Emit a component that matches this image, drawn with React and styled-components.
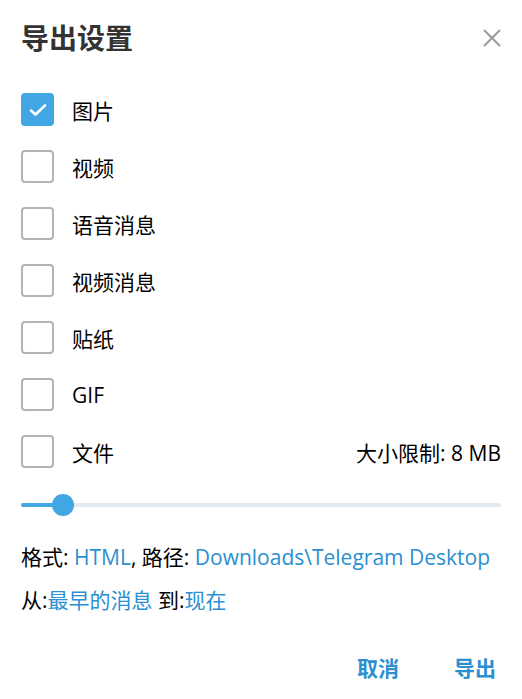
import React, { useState } from 'react'
import styled, { createGlobalStyle } from 'styled-components'

const Global = createGlobalStyle`
    html, body {
        margin: 0;
        background: #fff;
    }
    body {
        font-family: 'Open Sans', 'Noto Sans CJK SC', sans-serif;
        color: #000;
    }
`

const Box = styled.section`
    width: 522px;
    height: 699px;
    box-sizing: border-box;
    padding: 0 21px 0 21px;
    display: flex;
    flex-direction: column;
`

const Header = styled.header`
    height: 76px;
    display: flex;
    align-items: center;
    justify-content: space-between;
    .title {
        margin: 0;
        font-size: 28px;
        font-weight: 700;
        color: #333;
        line-height: 34px;
    }
`

const CloseBtn = styled.button`
    border: 0;
    background: none;
    padding: 0;
    margin-right: -4px;
    width: 26px;
    height: 26px;
    display: flex;
    align-items: center;
    justify-content: center;
    cursor: pointer;
`

const Options = styled.ul`
    list-style: none;
    margin: 17px 0 0;
    padding: 0;
    display: flex;
    flex-direction: column;
    gap: 24px;
`

const Row = styled.li`
    display: flex;
    align-items: center;
    height: 33px;
    font-size: 21px;
    .label {
        margin-left: 18px;
        flex: 1;
    }
`

const Check = styled.span`
    width: 33px;
    height: 33px;
    box-sizing: border-box;
    border-radius: 4px;
    border: ${p => (p.$on ? 'none' : '2px solid #b3b3b3')};
    background: ${p => (p.$on ? '#40a7e3' : '#fff')};
    display: flex;
    align-items: center;
    justify-content: center;
    flex-shrink: 0;
`

const Slider = styled.div`
    position: relative;
    margin-top: 25px;
    height: 24px;
    display: flex;
    align-items: center;
    .track {
        flex: 1;
        height: 4px;
        border-radius: 2px;
        background: #e4eaee;
        overflow: hidden;
    }
    .fill {
        height: 100%;
        background: #40a7e3;
    }
`

const Thumb = styled.span`
    position: absolute;
    top: 1px;
    width: 22px;
    height: 22px;
    margin-left: -11px;
    border-radius: 50%;
    background: #40a7e3;
`

const Info = styled.p`
    margin: 0;
    font-size: 21px;
    line-height: 26px;
    white-space: nowrap;
    margin-top: ${p => p.$top}px;
`

const Link = styled.a`
    color: #2b8fd1;
    text-decoration: none;
`

const Footer = styled.footer`
    margin-top: 42px;
    display: flex;
    justify-content: flex-end;
    gap: 55px;
    padding-right: 5px;
`

const Action = styled.button`
    border: 0;
    background: none;
    padding: 0;
    font-family: inherit;
    font-size: 21px;
    line-height: 26px;
    font-weight: 700;
    color: #2b8fd1;
    cursor: pointer;
`

const items = ['图片', '视频', '语音消息', '视频消息', '贴纸', 'GIF', '文件']

export default function App() {
    const [checked, setChecked] = useState({ 图片: true })
    const pct = 8.8

    return (
        <Box>
            <Global />
            <Header>
                <h2 className='title'>导出设置</h2>
                <CloseBtn type='button' aria-label='关闭'>
                    <svg width='18' height='18' viewBox='0 0 18 18'>
                        <path d='M1 1L17 17M17 1L1 17' stroke='#9a9a9a' strokeWidth='2' />
                    </svg>
                </CloseBtn>
            </Header>
            <Options>
                {items.map(name => (
                    <Row key={name} onClick={() => setChecked(c => ({ ...c, [name]: !c[name] }))}>
                        <Check $on={!!checked[name]}>
                            {checked[name] && (
                                <svg width='18' height='14' viewBox='0 0 18 14'>
                                    <path d='M2 7.5L6.5 11.5L16 2.5' fill='none' stroke='#fff' strokeWidth='2.6' strokeLinecap='round' strokeLinejoin='round' />
                                </svg>
                            )}
                        </Check>
                        <span className='label'>{name}</span>
                        {name === '文件' && <span>大小限制: 8 MB</span>}
                    </Row>
                ))}
            </Options>
            <Slider>
                <div className='track'>
                    <div className='fill' style={{ width: `${pct}%` }} />
                </div>
                <Thumb style={{ left: `${pct}%` }} />
            </Slider>
            <Info $top={27}>
                格式: <Link href='#'>HTML</Link>, 路径: <Link href='#'>Downloads\Telegram Desktop</Link>
            </Info>
            <Info $top={17}>
                从:<Link href='#'>最早的消息</Link> 到:<Link href='#'>现在</Link>
            </Info>
            <Footer>
                <Action type='button'>取消</Action>
                <Action type='button'>导出</Action>
            </Footer>
        </Box>
    )
}
